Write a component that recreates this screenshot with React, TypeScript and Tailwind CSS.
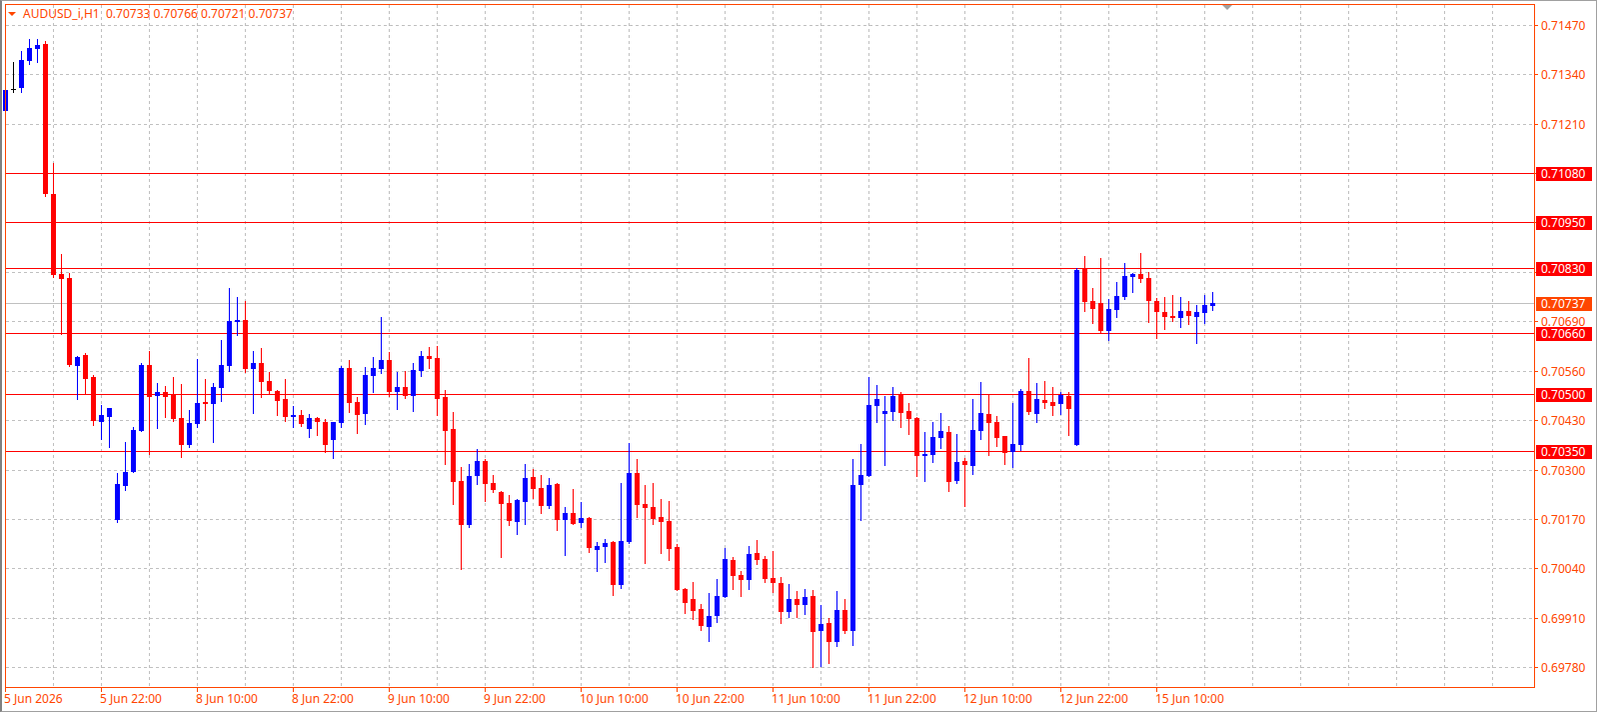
import React from "react";

const C: number[][] = [
[111,69,113,90],[89,62,92,89],[88,51,92,60],[61,39,64,48],[49,39,62,45],[44,41,196,194],[194,163,277,275],[274,254,334,279],[278,273,366,365],[366,356,399,357],
[355,353,393,379],[377,375,425,421],[422,405,439,415],[417,408,447,408],[520,473,522,484],[486,442,490,472],[472,427,472,430],[431,363,431,365],[365,351,454,397],[396,383,428,392],
[392,386,417,397],[394,377,421,419],[418,384,457,445],[445,410,447,423],[424,359,427,403],[402,379,420,404],[404,383,442,387],[388,340,401,365],[366,288,371,321],[322,297,335,320],
[320,301,372,369],[369,351,413,363],[363,348,397,382],[381,372,393,391],[391,390,415,401],[399,379,421,417],[417,406,427,415],[415,410,426,424],[429,414,437,418],[418,417,435,422],
[422,419,452,445],[440,422,458,422],[423,366,427,368],[368,360,412,403],[402,397,433,415],[414,367,424,375],[376,357,392,368],[369,317,373,360],[360,352,396,392],[392,372,409,387],
[387,371,398,396],[396,363,411,370],[371,351,376,356],[356,347,368,359],[358,346,415,399],[397,390,464,431],[429,412,504,482],[481,467,569,525],[525,464,527,476],[476,449,484,461],
[461,459,501,484],[483,475,492,490],[492,491,557,504],[503,495,525,521],[522,499,534,500],[502,464,524,478],[477,469,498,489],[488,475,513,506],[506,478,508,485],[484,483,530,520],
[520,507,555,513],[513,489,524,524],[523,502,527,518],[518,517,552,548],[550,542,571,546],[547,539,562,543],[542,541,595,585],[585,483,588,541],[542,443,543,473],[473,459,517,505],
[504,485,563,508],[507,483,524,519],[517,499,553,522],[521,501,560,549],[547,544,590,590],[589,588,613,603],[599,582,619,611],[609,604,630,626],[627,593,641,616],[616,579,622,596],
[597,548,597,559],[560,557,589,576],[575,571,596,580],[580,546,589,554],[553,540,564,560],[559,556,582,579],[578,551,592,583],[583,577,623,612],[612,584,617,599],[599,591,617,605],
[605,589,614,597],[596,590,667,632],[631,605,666,624],[623,618,663,642],[642,591,646,610],[610,599,633,631],[631,459,645,485],[485,444,520,475],[476,377,476,405],[406,385,422,399],
[414,396,465,411],[412,387,420,396],[394,392,427,413],[411,403,434,419],[418,417,476,456],[456,432,481,454],[455,422,462,437],[438,413,448,431],[432,426,491,482],[481,434,483,462],
[461,458,506,465],[466,399,474,430],[431,382,439,413],[414,394,455,423],[422,416,446,438],[436,436,464,453],[452,403,467,444],[445,389,450,391],[391,358,414,412],[414,383,422,399],
[400,381,408,403],[402,387,415,406],[404,392,414,395],[396,392,435,409],[445,268,445,270],[269,256,311,302],[301,288,323,309],[303,258,333,331],[331,299,340,309],[310,282,317,296],
[297,263,299,276],[277,273,292,274],[274,253,282,279],[278,272,322,301],[301,298,338,312],[312,297,329,317],[316,295,321,318],[318,297,327,311],[311,301,324,316],[317,305,343,312],
[313,295,323,305],[306,292,310,303],
];

const py = (p: number) => 667.3 - (p - 0.6978) * 38022;
const gridPrices = Array.from({ length: 14 }, (_, k) => 0.6978 + 0.0013 * k);
const redLevels = [0.7108, 0.7095, 0.7083, 0.7066, 0.705, 0.7035];
const times = ["5 Jun 2026","5 Jun 22:00","8 Jun 10:00","8 Jun 22:00","9 Jun 10:00","9 Jun 22:00","10 Jun 10:00","10 Jun 22:00","11 Jun 10:00","11 Jun 22:00","12 Jun 10:00","12 Jun 22:00","15 Jun 10:00"];
const hidden = (p: number) => redLevels.some((r) => Math.abs(py(r) - py(p)) < 10);

export default function App() {
  const vx = Array.from({ length: 31 }, (_, k) => 53 + 48 * k);
  return (
    <div className="w-[1601px] h-[713px] bg-white overflow-hidden">
      <div className="w-[1598px] h-[712px] border border-[#a0a0a0] border-l-2 border-l-[#808080] bg-white relative font-['Liberation_Sans',Arial,sans-serif]">
        <svg width="1598" height="712" className="absolute left-0 top-0 font-['Liberation_Sans',Arial,sans-serif]">
          <g transform="translate(-2,-1)">
            {vx.map((x) => (
              <line key={"v" + x} x1={x + 0.5} x2={x + 0.5} y1={5} y2={687} stroke="#c0c0c0" strokeDasharray="3 3" />
            ))}
            {gridPrices.map((p) => (
              <line key={"h" + p} x1={6} x2={1535} y1={Math.round(py(p)) + 0.5} y2={Math.round(py(p)) + 0.5} stroke="#c0c0c0" strokeDasharray="3 3" />
            ))}
            <line x1={6} x2={1535} y1={303.5} y2={303.5} stroke="#c0c0c0" />
            {redLevels.map((p) => (
              <line key={"r" + p} x1={6} x2={1535} y1={Math.round(py(p)) + 0.5} y2={Math.round(py(p)) + 0.5} stroke="#ff0000" />
            ))}
            {C.map(([o, h, l, c], i) => {
              const cx = 5.5 + 8 * i;
              const col = c < o ? "#0000ff" : c > o ? "#ff0000" : "#000000";
              const top = Math.min(o, c);
              const hgt = Math.max(1, Math.abs(o - c));
              return (
                <g key={i}>
                  <line x1={cx} x2={cx} y1={h} y2={l + 1} stroke={col} />
                  {o === c ? (
                    <line x1={cx - 2.5} x2={cx + 2.5} y1={o + 0.5} y2={o + 0.5} stroke={col} />
                  ) : (
                    <rect x={cx - 2.5} y={top} width={5} height={hgt} fill={col} />
                  )}
                </g>
              );
            })}
            <rect x={5.5} y={4.5} width={1530} height={683} fill="none" stroke="#ff4500" />
            <polygon points="1223,5 1233,5 1228,10" fill="#a0a0a0" />
            <polygon points="8,12 16,12 12,16" fill="#ff4500" />
            <text x={23} y={18} fontSize="12" fill="#ff4500">AUDUSD_i,H1</text>
            <text x={106} y={18} fontSize="12" fill="#ff4500">0.70733 0.70766 0.70721 0.70737</text>
            {gridPrices.map((p) => (
              <g key={"l" + p}>
                <line x1={1536} x2={1539} y1={Math.round(py(p)) + 0.5} y2={Math.round(py(p)) + 0.5} stroke="#ff4500" />
                {!hidden(p) && (
                  <text x={1542} y={Math.round(py(p)) + 5} fontSize="12" fill="#ff4500">{p.toFixed(5)}</text>
                )}
              </g>
            ))}
            {redLevels.map((p) => (
              <g key={"rl" + p}>
                <rect x={1537} y={Math.round(py(p)) - 6} width={56} height={14} fill="#ff0000" />
                <text x={1542} y={Math.round(py(p)) + 5} fontSize="12" fill="#ffffff">{p.toFixed(5)}</text>
              </g>
            ))}
            <rect x={1537} y={297} width={56} height={14} fill="#ff4500" />
            <text x={1542} y={308} fontSize="12" fill="#ffffff">0.70737</text>
            {times.map((t, k) => (
              <g key={t}>
                <line x1={5.5 + 96 * k} x2={5.5 + 96 * k} y1={688} y2={692} stroke="#ff4500" />
                <text x={4 + 96 * k} y={703} fontSize="12" fill="#ff4500">{t}</text>
              </g>
            ))}
          </g>
        </svg>
      </div>
    </div>
  );
}
